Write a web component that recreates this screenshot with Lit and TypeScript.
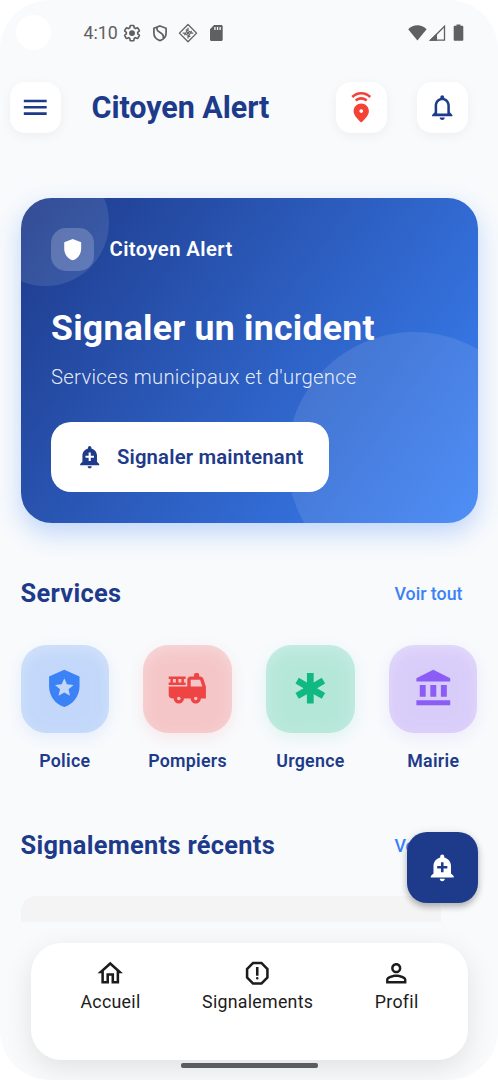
import { LitElement, html, css, svg } from "lit";
import { customElement } from "lit/decorators.js";

const PATHS = {
  menu: "M3 18h18v-2H3v2zm0-5h18v-2H3v2zm0-7v2h18V6H3z",
  share:
    "M12 9c-3.15 0-6 2.41-6 6.15 0 2.49 2 5.44 6 8.85 4-3.41 6-6.36 6-8.85C18 11.41 15.15 9 12 9zm0 7.5c-.83 0-1.5-.67-1.5-1.5s.67-1.5 1.5-1.5 1.5.67 1.5 1.5-.67 1.5-1.5 1.5zM12 4c1.93 0 3.68.78 4.95 2.05l-1.41 1.41C14.63 6.56 13.38 6 12 6s-2.63.56-3.54 1.46L7.05 6.05C8.32 4.78 10.07 4 12 4zm7.78-.77l-1.41 1.41C16.74 3.01 14.49 2 12.01 2S7.27 3.01 5.64 4.64L4.22 3.22C6.22 1.23 8.98 0 12 0s5.78 1.23 7.78 3.23z",
  bell: "M12 22c1.1 0 2-.9 2-2h-4c0 1.1.9 2 2 2zm6-6v-5c0-3.07-1.63-5.64-4.5-6.32V4c0-.83-.67-1.5-1.5-1.5s-1.5.67-1.5 1.5v.68C7.64 5.36 6 7.92 6 11v5l-2 2v1h16v-1l-2-2zm-2 1H8v-6c0-2.48 1.51-4.5 4-4.5s4 2.02 4 4.5v6z",
  shield: "M12 2L4 5v6.09c0 5.05 3.41 9.76 8 10.91 4.59-1.15 8-5.86 8-10.91V5l-8-3z",
  addAlert:
    "M10.01 21.01c0 1.1.89 1.99 1.99 1.99s1.99-.89 1.99-1.99h-3.98zm8.87-4.19V11c0-3.25-2.25-5.97-5.29-6.69v-.72C13.59 2.71 12.88 2 12 2s-1.59.71-1.59 1.59v.72C7.37 5.03 5.12 7.75 5.12 11v5.82L3 18.94V20h18v-1.06l-2.12-2.12zM16 13.01h-3v3h-2v-3H8V11h3V8h2v3h3v2.01z",
  police:
    "M12 1L3 5v6c0 5.55 3.84 10.74 9 12 5.16-1.26 9-6.45 9-12V5l-9-4zM14.5 12.59l.9 3.88-3.4-2.05-3.4 2.05.9-3.87-3-2.6 3.96-.34L12 6.02l1.54 3.64 3.96.34-3 2.59z",
  truck:
    "M22.9 10.69l-1.44-4.32C21.18 5.55 20.42 5 19.56 5H19V4c0-.55-.45-1-1-1h-1c-.55 0-1 .45-1 1v1h-2c-1.1 0-2 .9-2 2v4H1v5c0 1.1.9 2 2 2h1c0 1.66 1.34 3 3 3s3-1.34 3-3h4c0 1.66 1.34 3 3 3s3-1.34 3-3h3v-6.68c0-.21-.03-.42-.1-.63zM7 19c-.55 0-1-.45-1-1s.45-1 1-1 1 .45 1 1-.45 1-1 1zm10 0c-.55 0-1-.45-1-1s.45-1 1-1 1 .45 1 1-.45 1-1 1zm-3-8V7h5.56l1.33 4H14zM11 8.5h-1v-2h1V5H1v1.5h1v2H1V10h10V8.5zm-5.75 0H3.5v-2h1.75v2zm3.25 0H6.75v-2H8.5v2z",
  asterisk:
    "M20.79 9.23l-2-3.46L14 8.54V3h-4v5.54L5.21 5.77l-2 3.46L8 12l-4.79 2.77 2 3.46L10 15.46V21h4v-5.54l4.79 2.77 2-3.46L16 12z",
  bank: "M4 10h3.500v7H4zM10.250 10h3.500v7h-3.500zM2 19h20v3H2zM16.500 10h3.500v7h-3.500zM12 1L2 6v2h20V6z",
  home: "M12 5.69l5 4.5V18h-2v-6H9v6H7v-7.81l5-4.5M12 3L2 12h3v8h6v-6h2v6h6v-8h3L12 3z",
  report:
    "M15.73 3H8.27L3 8.27v7.46L8.27 21h7.46L21 15.73V8.27L15.73 3zM19 14.9L14.9 19H9.1L5 14.9V9.1L9.1 5h5.8L19 9.1v5.8zM13 16a1 1 0 1 1-2 0 1 1 0 0 1 2 0zM11 7h2v7h-2z",
  person:
    "M12 5.9c1.16 0 2.1.94 2.1 2.1s-.94 2.1-2.1 2.1S9.9 9.16 9.9 8s.94-2.1 2.1-2.1m0 9c2.97 0 6.1 1.46 6.1 2.1v1.1H5.9V17c0-.64 3.13-2.1 6.1-2.1M12 4C9.79 4 8 5.79 8 8s1.79 4 4 4 4-1.79 4-4-1.79-4-4-4zm0 9c-2.67 0-8 1.34-8 4v3h16v-3c0-2.66-5.33-4-8-4z",
};

const icon = (name: keyof typeof PATHS, cls = "i24") => html`
  <svg class=${cls} viewBox="0 0 24 24" fill="currentColor" fill-rule="evenodd">
    ${svg`<path d=${PATHS[name]}></path>`}
  </svg>
`;

const SERVICES: { name: string; cls: string; icon: keyof typeof PATHS }[] = [
  { name: "Police", cls: "blue", icon: "police" },
  { name: "Pompiers", cls: "red", icon: "truck" },
  { name: "Urgence", cls: "green", icon: "asterisk" },
  { name: "Mairie", cls: "violet", icon: "bank" },
];

@customElement("app-root")
export class AppRoot extends LitElement {
  static styles = css`
    :host {
      display: block;
      background: #fff;
      font-family: Roboto, sans-serif;
      color: #1e3a8a;
    }
    * {
      box-sizing: border-box;
    }
    svg {
      display: block;
      flex: none;
    }
    .i24 {
      width: 30.5px;
      height: 30.5px;
    }
    .i20 {
      width: 25.4px;
      height: 25.4px;
    }
    .i32 {
      width: 40.6px;
      height: 40.6px;
    }
    .screen {
      position: relative;
      width: 498px;
      height: 1080px;
      border-radius: 50px;
      background: #f8fafc;
      overflow: hidden;
      display: flex;
      flex-direction: column;
      white-space: nowrap;
    }
    .status {
      height: 82px;
      flex: none;
      padding: 15px 0 0 16px;
      display: flex;
      align-items: flex-start;
      color: #5f6061;
    }
    .camera {
      width: 35px;
      height: 35px;
      border-radius: 50%;
      background: #fff;
      margin-right: 32.5px;
    }
    .time {
      width: 38.5px;
      font-size: 17.8px;
      line-height: 36px;
    }
    .sysleft {
      width: 102px;
      height: 20px;
      margin-top: 8px;
    }
    .sysright {
      width: 58px;
      height: 20px;
      margin: 8px 0 0 183.5px;
    }
    .appbar {
      flex: none;
      height: 51px;
      padding: 0 30px 0 10px;
      display: flex;
      align-items: center;
    }
    .title {
      flex: 1;
      padding-left: 30.5px;
      font-size: 30.5px;
      font-weight: 700;
      line-height: 50px;
      letter-spacing: -0.05px;
    }
    .square {
      width: 51px;
      height: 51px;
      border-radius: 15px;
      background: #fff;
      box-shadow: 0 3px 12px rgba(0, 0, 0, 0.05);
      display: grid;
      place-items: center;
    }
    .actions {
      display: flex;
      gap: 30px;
    }
    .alert {
      color: #f44336;
    }
    .body {
      flex: none;
      height: 789px;
      padding: 65px 20.5px 0;
      display: flex;
      flex-direction: column;
      overflow: hidden;
    }
    .card {
      position: relative;
      flex: none;
      height: 324.5px;
      border-radius: 30.5px;
      background: linear-gradient(125.35deg, #1e3a8a, #3b82f6);
      box-shadow: 0 10px 25px rgba(59, 130, 246, 0.3);
      color: #fff;
    }
    .deco {
      position: absolute;
      inset: 0;
      overflow: hidden;
      border-radius: inherit;
    }
    .deco::before,
    .deco::after {
      content: "";
      position: absolute;
      border-radius: 50%;
      background: rgba(255, 255, 255, 0.1);
    }
    .deco::before {
      width: 127px;
      height: 127px;
      left: -38.5px;
      top: -39px;
    }
    .deco::after {
      width: 254px;
      height: 254px;
      right: -63.5px;
      bottom: -63.5px;
    }
    .content {
      position: relative;
      padding: 30px 30.5px;
      display: flex;
      flex-direction: column;
      align-items: flex-start;
    }
    .brand {
      display: flex;
      align-items: center;
      gap: 15.5px;
      font-size: 20.3px;
      font-weight: 600;
      letter-spacing: 0.4px;
      line-height: 43px;
    }
    .badge {
      width: 43px;
      height: 43px;
      border-radius: 15px;
      background: rgba(255, 255, 255, 0.2);
      display: grid;
      place-items: center;
    }
    .headline {
      margin-top: 34.5px;
      font-size: 35.6px;
      font-weight: 700;
      letter-spacing: 0.27px;
      line-height: 44px;
    }
    .sub {
      margin-top: 14px;
      font-size: 20.3px;
      font-weight: 300;
      letter-spacing: 0.3px;
      line-height: 26px;
      color: rgba(255, 255, 255, 0.9);
    }
    .cta {
      margin-top: 32.5px;
      width: 277.5px;
      height: 70px;
      border-radius: 20px;
      padding-left: 25.5px;
      background: #fff;
      color: #1e3a8a;
      display: flex;
      align-items: center;
      gap: 15px;
      font-size: 20.3px;
      font-weight: 600;
      letter-spacing: 0.18px;
    }
    .section {
      flex: none;
      display: flex;
      justify-content: space-between;
      align-items: center;
      height: 36px;
    }
    .services {
      margin-top: 52px;
    }
    .recent {
      margin-top: 53px;
    }
    .heading {
      font-size: 25.4px;
      font-weight: 700;
      letter-spacing: 0.3px;
      line-height: 36px;
    }
    .all {
      padding-right: 15px;
      padding-top: 1px;
      font-size: 17.8px;
      font-weight: 500;
      color: #3b82f6;
    }
    .tiles {
      flex: none;
      margin-top: 34px;
      display: flex;
      justify-content: space-between;
    }
    .service {
      width: 88.5px;
      display: flex;
      flex-direction: column;
      align-items: center;
      gap: 14.5px;
      font-size: 17.8px;
      font-weight: 600;
      letter-spacing: 0.28px;
      line-height: 26px;
    }
    .tile {
      position: relative;
      width: 88.5px;
      height: 88.5px;
      display: grid;
      place-items: center;
    }
    .tile::before,
    .tile::after {
      content: "";
      position: absolute;
      inset: 0;
      border-radius: 25.5px;
      background: currentColor;
    }
    .tile::before {
      opacity: 0.1;
      filter: blur(7.5px);
      transform: translateY(5px);
    }
    .tile::after {
      opacity: 0.2;
    }
    .tile svg {
      position: relative;
      z-index: 1;
    }
    .blue {
      color: #3b82f6;
    }
    .red {
      color: #ef4444;
    }
    .green {
      color: #10b981;
    }
    .violet {
      color: #8b5cf6;
    }
    .label {
      color: #1e3a8a;
    }
    .placeholder {
      flex: none;
      width: 420px;
      margin-top: 33px;
      height: 120px;
      border-radius: 15px;
      background: #f4f4f4;
    }
    .fab {
      position: absolute;
      left: 407px;
      top: 831.5px;
      width: 71px;
      height: 71px;
      border-radius: 20px;
      background: #1e3a8a;
      color: #fff;
      display: grid;
      place-items: center;
      box-shadow: 0 4px 6px rgba(0, 0, 0, 0.24), 0 1px 10px rgba(0, 0, 0, 0.1);
    }
    .nav {
      flex: none;
      position: relative;
      margin: 21px 30px 0 31px;
      height: 117px;
      padding: 15px 24.5px 0 24.5px;
      border-radius: 30.5px;
      background: #fff;
      box-shadow: 0 8px 28px rgba(0, 0, 0, 0.1);
      display: flex;
      justify-content: space-between;
      color: #1c1c1c;
    }
    .tab {
      display: flex;
      flex-direction: column;
      align-items: center;
      padding: 0 25px;
      font-size: 17.8px;
      letter-spacing: 0.27px;
      line-height: 26px;
    }
    .gesture {
      flex: none;
      width: 137px;
      height: 4.5px;
      margin: 3px auto 0;
      border-radius: 2px;
      background: #5f6361;
    }
  `;

  render() {
    return html`
      <div class="screen">
        <div class="status">
          <div class="camera"></div>
          <div class="time">4:10</div>
          <svg class="sysleft" viewBox="0 0 102 20" fill="none" stroke="#5f6061">
            <g transform="translate(.9 1) scale(.76)">
              <path
                stroke-width="2.1"
                stroke-linejoin="round"
                d="M19.430 12.980c.04-.32.07-.64.07-.98s-.03-.66-.07-.98l2.110-1.650c.19-.15.24-.42.12-.64l-2-3.460c-.12-.22-.39-.3-.61-.22l-2.490 1c-.52-.4-1.080-.73-1.690-.98l-.38-2.650C14.460 2.180 14.250 2 14 2h-4c-.25 0-.46.18-.49.42l-.38 2.650c-.61.25-1.170.59-1.690.98l-2.490-1c-.23-.09-.49 0-.61.22l-2 3.460c-.13.22-.07.49.12.64l2.110 1.650c-.04.32-.07.65-.07.98s.03.66.07.98l-2.110 1.650c-.19.15-.24.42-.12.64l2 3.460c.12.22.39.3.61.22l2.490-1c.52.4 1.080.73 1.690.98l.38 2.650c.03.24.24.42.49.42h4c.25 0 .46-.18.49-.42l.38-2.650c.61-.25 1.170-.59 1.690-.98l2.490 1c.23.09.49 0 .61-.22l2-3.460c.12-.22.07-.49-.12-.64l-2.110-1.650z"
              />
              <circle cx="12" cy="12" r="3.900" fill="#5f6061" stroke="none" />
            </g>
            <path
              d="M38 3l6.100 2.300v5c0 3.500-2.500 6.200-6.100 7.300-3.600-1.100-6.100-3.800-6.100-7.300v-5z"
              stroke-width="1.700"
            />
            <path d="M35 4.200v2.300c0 2.600 6.300 3.200 6.300 6.800v2" stroke-width="1.700" />
            <path d="M66 1.500l8.600 8.600-8.600 8.600-8.600-8.600z" stroke-width="1.300" stroke-linejoin="round" />
            <path
              d="M66 4.800v3l-2.200-1.200M66 15.400v-3l2.200 1.200M60.700 10.100h3l-1.200 2.200M71.300 10.100h-3l1.200-2.200M64 8.100l4 4M68 8.100l-4 4"
              stroke-width="1.200"
            />
            <path
              fill="#5f6061"
              stroke="none"
              fill-rule="evenodd"
              d="M92 2h7.200c.9 0 1.500.6 1.500 1.500v13c0 .9-.6 1.500-1.500 1.500H89.500c-.9 0-1.500-.6-1.500-1.500V6.300zM92.300 4v3h1.300V4zm2.600 0v3h1.300V4zm2.600 0v3h1.300V4z"
            />
          </svg>
          <svg class="sysright" viewBox="0 0 58 20" fill="#5f6061">
            <path d="M.2 6.200C5.200.8 13.600.8 18.600 6.200L9.400 17.500z" />
            <path d="M36.500 3.400v13.800H22.700z" fill="none" stroke="#5f6061" stroke-width="1.300" />
            <path d="M29 10.200v7.500H21z" />
            <path
              d="M48.500 2.800V1.400h4v1.400h1.700c.7 0 1.100.4 1.100 1.100v12.800c0 .7-.4 1.100-1.100 1.100h-7.400c-.7 0-1.100-.4-1.100-1.100V3.900c0-.7.4-1.100 1.100-1.100z"
            />
          </svg>
        </div>

        <div class="appbar">
          <div class="square">${icon("menu")}</div>
          <div class="title">Citoyen Alert</div>
          <div class="actions">
            <div class="square alert">${icon("share")}</div>
            <div class="square">${icon("bell")}</div>
          </div>
        </div>

        <div class="body">
          <div class="card">
            <div class="deco"></div>
            <div class="content">
              <div class="brand">
                <div class="badge">${icon("shield", "i20")}</div>
                <span>Citoyen Alert</span>
              </div>
              <div class="headline">Signaler un incident</div>
              <div class="sub">Services municipaux et d'urgence</div>
              <div class="cta">${icon("addAlert", "i20")}<span>Signaler maintenant</span></div>
            </div>
          </div>

          <div class="section services">
            <div class="heading">Services</div>
            <div class="all">Voir tout</div>
          </div>
          <div class="tiles">
            ${SERVICES.map(
              (s) => html`
                <div class="service">
                  <div class="tile ${s.cls}">${icon(s.icon, "i32")}</div>
                  <span class="label">${s.name}</span>
                </div>
              `
            )}
          </div>

          <div class="section recent">
            <div class="heading">Signalements récents</div>
            <div class="all">Voir tout</div>
          </div>
          <div class="placeholder"></div>
        </div>

        <div class="nav">
          <div class="tab">${icon("home")}<span>Accueil</span></div>
          <div class="tab">${icon("report")}<span>Signalements</span></div>
          <div class="tab">${icon("person")}<span>Profil</span></div>
        </div>
        <div class="gesture"></div>

        <div class="fab">${icon("addAlert")}</div>
      </div>
    `;
  }
}
